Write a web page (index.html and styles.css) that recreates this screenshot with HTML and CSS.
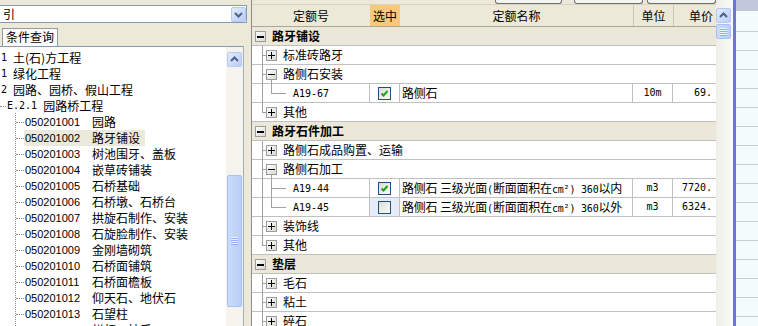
FILE: index.html
```html
<!DOCTYPE html>
<html lang="zh-CN">
<head>
    <meta charset="UTF-8">
    <title>定额查询</title>
    <link rel="stylesheet" href="styles.css">
</head>
<body>
<div class="app">
    <div class="left">
        <div class="combo">
            <span class="combo-text">引</span>
            <span class="btn combo-btn"><svg width="15" height="15" viewBox="0 0 15 15"><polyline points="4,6 7.5,9.5 11,6" fill="none" stroke="#4d6185" stroke-width="2"/></svg></span>
        </div>
        <div class="tabs"><span class="tab">条件查询</span></div>
        <div class="list">
            <div class="tree">
                <div class="node"><span class="m">1 </span>土(石)方工程</div>
                <div class="node"><span class="m">1 </span>绿化工程</div>
                <div class="node"><span class="m">2 </span>园路、园桥、假山工程</div>
                <div class="node chap"><span class="m">E.2.1 </span>园路桥工程</div>
                <div class="kids">
                    <div class="node item"><span class="lbl"><span class="code">050201001</span>园路</span></div>
                    <div class="node item sel"><span class="lbl"><span class="code">050201002</span>路牙铺设</span></div>
                    <div class="node item"><span class="lbl"><span class="code">050201003</span>树池围牙、盖板</span></div>
                    <div class="node item"><span class="lbl"><span class="code">050201004</span>嵌草砖铺装</span></div>
                    <div class="node item"><span class="lbl"><span class="code">050201005</span>石桥基础</span></div>
                    <div class="node item"><span class="lbl"><span class="code">050201006</span>石桥墩、石桥台</span></div>
                    <div class="node item"><span class="lbl"><span class="code">050201007</span>拱旋石制作、安装</span></div>
                    <div class="node item"><span class="lbl"><span class="code">050201008</span>石旋脸制作、安装</span></div>
                    <div class="node item"><span class="lbl"><span class="code">050201009</span>金刚墙砌筑</span></div>
                    <div class="node item"><span class="lbl"><span class="code">050201010</span>石桥面铺筑</span></div>
                    <div class="node item"><span class="lbl"><span class="code">050201011</span>石桥面檐板</span></div>
                    <div class="node item"><span class="lbl"><span class="code">050201012</span>仰天石、地伏石</span></div>
                    <div class="node item"><span class="lbl"><span class="code">050201013</span>石望柱</span></div>
                    <div class="node item"><span class="lbl"><span class="code">050201014</span>栏杆、扶手</span></div>
                </div>
            </div>
            <div class="sb sb-list">
                <span class="btn"><svg width="15" height="15" viewBox="0 0 15 15"><polyline points="4,9 7.5,5.5 11,9" fill="none" stroke="#4d6185" stroke-width="2"/></svg></span>
                <span class="thumb thumb-list"><span class="grip"></span></span>
            </div>
        </div>
    </div>

    <div class="split"></div>

    <div class="grid">
        <div class="grid-main">
            <div class="toolbar">
                <span class="tb-btn tb1"></span>
                <span class="tb-btn tb2"></span>
                <span class="tb-btn tb3"></span>
            </div>
            <div class="head">
                <div class="h-code">定额号</div>
                <div class="h-chk">选中</div>
                <div class="h-name">定额名称</div>
                <div class="h-unit">单位</div>
                <div class="h-price">单价</div>
            </div>
            <div class="rows">
                <div class="row grp"><div class="c-tree"><span class="box minus"></span><span class="t">路牙铺设</span></div></div>
                <div class="row"><div class="c-tree"><i class="v"></i><i class="h"></i><span class="box plus"></span><span class="t">标准砖路牙</span></div></div>
                <div class="row"><div class="c-tree"><i class="v"></i><i class="h"></i><i class="v2b"></i><span class="box minus"></span><span class="t">路侧石安装</span></div></div>
                <div class="row">
                    <div class="c-code"><i class="v"></i><i class="v2h"></i><i class="h2"></i><span class="m">A19-67</span></div>
                    <div class="c-chk"><span class="chk"><svg width="11" height="11" viewBox="0 0 11 11"><polyline points="2.5,5.5 4.5,7.5 8.5,3" fill="none" stroke="#21a121" stroke-width="2"/></svg></span></div>
                    <div class="c-name">路侧石</div>
                    <div class="c-unit m">10m</div>
                    <div class="c-price m">69.</div>
                </div>
                <div class="row"><div class="c-tree"><i class="vh"></i><i class="h"></i><span class="box plus"></span><span class="t">其他</span></div></div>

                <div class="row grp"><div class="c-tree"><span class="box minus"></span><span class="t">路牙石件加工</span></div></div>
                <div class="row"><div class="c-tree"><i class="v"></i><i class="h"></i><span class="box plus"></span><span class="t">路侧石成品购置、运输</span></div></div>
                <div class="row"><div class="c-tree"><i class="v"></i><i class="h"></i><i class="v2b"></i><span class="box minus"></span><span class="t">路侧石加工</span></div></div>
                <div class="row">
                    <div class="c-code"><i class="v"></i><i class="v2"></i><i class="h2"></i><span class="m">A19-44</span></div>
                    <div class="c-chk"><span class="chk"><svg width="11" height="11" viewBox="0 0 11 11"><polyline points="2.5,5.5 4.5,7.5 8.5,3" fill="none" stroke="#21a121" stroke-width="2"/></svg></span></div>
                    <div class="c-name">路侧石 三级光面<span class="m">(</span>断面面积在<span class="m">cm²) 360</span>以内</div>
                    <div class="c-unit m">m3</div>
                    <div class="c-price m">7720.</div>
                </div>
                <div class="row">
                    <div class="c-code"><i class="v"></i><i class="v2h"></i><i class="h2"></i><span class="m">A19-45</span></div>
                    <div class="c-chk cur"><span class="chk"></span></div>
                    <div class="c-name">路侧石 三级光面<span class="m">(</span>断面面积在<span class="m">cm²) 360</span>以外</div>
                    <div class="c-unit m">m3</div>
                    <div class="c-price m">6324.</div>
                </div>
                <div class="row"><div class="c-tree"><i class="v"></i><i class="h"></i><span class="box plus"></span><span class="t">装饰线</span></div></div>
                <div class="row"><div class="c-tree"><i class="vh"></i><i class="h"></i><span class="box plus"></span><span class="t">其他</span></div></div>

                <div class="row grp"><div class="c-tree"><span class="box minus"></span><span class="t">垫层</span></div></div>
                <div class="row"><div class="c-tree"><i class="v"></i><i class="h"></i><span class="box plus"></span><span class="t">毛石</span></div></div>
                <div class="row"><div class="c-tree"><i class="v"></i><i class="h"></i><span class="box plus"></span><span class="t">粘土</span></div></div>
                <div class="row"><div class="c-tree"><i class="v"></i><i class="h"></i><span class="box plus"></span><span class="t">碎石</span></div></div>
            </div>
        </div>
        <div class="sb sb-grid">
            <span class="btn"><svg width="15" height="15" viewBox="0 0 15 15"><polyline points="4,9 7.5,5.5 11,9" fill="none" stroke="#4d6185" stroke-width="2"/></svg></span>
            <span class="thumb thumb-grid"><span class="grip"></span></span>
        </div>
    </div>

    <div class="side">
        <div class="blue"></div>
        <div class="mint">
            <div class="mint-top"></div>
            <div class="mint-row first"></div>
            <div class="mint-row"></div>
            <div class="mint-row"></div>
            <div class="mint-row"></div>
            <div class="mint-row"></div>
            <div class="mint-row"></div>
            <div class="mint-row"></div>
            <div class="mint-row"></div>
            <div class="mint-row"></div>
            <div class="mint-row"></div>
            <div class="mint-row"></div>
            <div class="mint-row"></div>
            <div class="mint-row"></div>
            <div class="mint-row"></div>
            <div class="mint-row"></div>
            <div class="mint-row"></div>
        </div>
    </div>
</div>
</body>
</html>
```

FILE: styles.css
```css
* {
    box-sizing: border-box;
}
body {
    margin: 0;
    width: 758px;
    height: 326px;
    overflow: hidden;
    background-color: #ece9d8;
    font-family: "Noto Sans CJK SC", sans-serif;
    font-size: 12px;
    color: #000;
}
.app {
    display: flex;
    height: 326px;
}
.m {
    font-family: "DejaVu Sans Mono", "Noto Sans CJK SC", monospace;
    font-size: 10px;
}

/* left panel */
.left {
    width: 244px;
    display: flex;
    flex-direction: column;
}
.combo {
    margin-top: 5px;
    margin-right: -3px;
    height: 18px;
    border: 1px solid #7f9db9;
    border-left: none;
    background-color: #fff;
    display: flex;
    align-items: center;
    justify-content: space-between;
}
.combo-text {
    padding-left: 3px;
    line-height: 16px;
}
.combo-btn {
    height: 16px;
}
.btn {
    display: flex;
    align-items: center;
    justify-content: center;
    width: 15px;
    height: 15px;
    border: 1px solid #b6c9f3;
    border-radius: 2px;
    background: linear-gradient(135deg, #e3ebfd, #b9cdf7);
}
.btn svg {
    display: block;
    flex: none;
}
.tabs {
    height: 23px;
    padding: 5px 0 0 2px;
}
.tab {
    display: inline-block;
    height: 18px;
    padding: 0 3px;
    border: 1px solid #919b9c;
    border-bottom: none;
    background-color: #fcfcfe;
    line-height: 16px;
}
.list {
    flex: 1;
    display: flex;
    min-height: 0;
    border-top: 1px solid #7f9db9;
    border-right: 1px solid #a5acb5;
    background-color: #fff;
}
.tree {
    flex: 1;
    overflow: hidden;
    padding-top: 3px;
}
.node {
    height: 16px;
    line-height: 16px;
    display: flex;
    align-items: center;
    white-space: nowrap;
    padding-left: 1px;
}
.node .m {
    white-space: pre;
}
.chap {
    position: relative;
    padding-left: 7px;
}
.chap::before {
    content: "";
    position: absolute;
    left: 0;
    top: 8px;
    width: 6px;
    border-top: 1px dotted #8e8e8e;
}
.kids {
    position: relative;
}
.kids::before {
    content: "";
    position: absolute;
    left: 15px;
    top: -1px;
    bottom: 0;
    border-left: 1px dotted #8e8e8e;
}
.item {
    position: relative;
    padding-left: 24px;
}
.item::before {
    content: "";
    position: absolute;
    left: 16px;
    top: 8px;
    width: 8px;
    border-top: 1px dotted #8e8e8e;
}
.lbl {
    display: flex;
    align-items: center;
    height: 16px;
    padding: 0 5px 0 1px;
}
.code {
    width: 67px;
    font-family: "Liberation Sans", sans-serif;
    font-size: 11px;
}
.sel .lbl {
    background-color: #ebe8dc;
}
.sb {
    display: flex;
    flex-direction: column;
    background-color: #f4f3ee;
}
.sb-list {
    width: 17px;
    padding: 5px 1px 0 1px;
}
.thumb {
    display: flex;
    align-items: center;
    justify-content: center;
    border: 1px solid #a9bff0;
    border-radius: 2px;
    background: linear-gradient(90deg, #cddbfd, #b9cdf8);
}
.thumb-list {
    margin-top: 108px;
    height: 132px;
}
.grip {
    width: 7px;
    height: 8px;
    background: repeating-linear-gradient(#eef4fe 0 1px, #8eaef3 1px 2px);
}

/* splitter */
.split {
    width: 7px;
}

/* right grid */
.grid {
    display: flex;
    border-left: 1px solid #8c8c8c;
    background-color: #fff;
}
.grid-main {
    width: 464px;
    display: flex;
    flex-direction: column;
}
.toolbar {
    height: 4px;
    display: flex;
    background-color: #ece9d8;
}
.tb-btn {
    height: 4px;
    border: 1px solid #6f6f6f;
    border-top: none;
    border-radius: 0 0 3px 3px;
    background-color: #f6f5f0;
}
.tb1 {
    margin-left: 243px;
    width: 71px;
}
.tb2 {
    margin-left: 12px;
    width: 74px;
}
.tb3 {
    margin-left: 4px;
    width: 73px;
}
.head {
    display: flex;
    height: 23px;
    border-top: 1px solid #d8d4c4;
    border-bottom: 1px solid #aca899;
    background-color: #ece9d8;
    line-height: 21px;
    white-space: nowrap;
}
.h-code {
    width: 118px;
    text-align: center;
}
.h-chk {
    width: 30px;
    text-align: center;
    background-color: #f8c97c;
}
.h-name {
    width: 233px;
    text-align: center;
}
.h-unit {
    width: 40px;
    text-align: center;
    border-left: 1px solid #c9c5b4;
}
.h-price {
    width: 43px;
    text-align: right;
    padding-right: 3px;
    border-left: 1px solid #c9c5b4;
}
.rows {
    flex: 1;
    overflow: hidden;
}
.row {
    display: flex;
    height: 19px;
    border-bottom: 1px solid #c0c0c0;
    white-space: nowrap;
}
.grp {
    background-color: #ebe8da;
    font-weight: bold;
}
.c-tree {
    position: relative;
    flex: 1;
    display: flex;
    align-items: center;
    padding-left: 14px;
}
.grp .c-tree {
    padding-left: 3px;
}
.t {
    margin-left: 6px;
    line-height: 18px;
}
.box {
    position: relative;
    width: 11px;
    height: 11px;
    border: 1px solid #9c9c9c;
    background: linear-gradient(135deg, #fff, #d9d8d0);
}
.box::before {
    content: "";
    position: absolute;
    left: 1px;
    top: 4px;
    width: 7px;
    height: 1px;
    background-color: #000;
}
.plus::after {
    content: "";
    position: absolute;
    left: 4px;
    top: 1px;
    width: 1px;
    height: 7px;
    background-color: #000;
}
.grp .box::before {
    height: 2px;
}
.row i {
    position: absolute;
    background-color: #a0a0a0;
}
.v {
    left: 10px;
    top: 0;
    bottom: -1px;
    width: 1px;
}
.vh {
    left: 10px;
    top: 0;
    height: 9px;
    width: 1px;
}
.h {
    left: 10px;
    top: 9px;
    width: 4px;
    height: 1px;
}
.v2b {
    left: 19px;
    top: 14px;
    bottom: -1px;
    width: 1px;
}
.v2 {
    left: 19px;
    top: 0;
    bottom: -1px;
    width: 1px;
}
.v2h {
    left: 19px;
    top: 0;
    height: 9px;
    width: 1px;
}
.h2 {
    left: 19px;
    top: 9px;
    width: 15px;
    height: 1px;
}
.c-code {
    position: relative;
    width: 118px;
    display: flex;
    align-items: center;
    padding-left: 41px;
    border-right: 1px solid #c0c0c0;
}
.c-chk {
    width: 30px;
    display: flex;
    align-items: center;
    justify-content: center;
    border-right: 1px solid #c0c0c0;
}
.c-chk.cur {
    background-color: #e6edf8;
}
.chk {
    display: flex;
    align-items: center;
    justify-content: center;
    width: 13px;
    height: 13px;
    border: 1px solid #1c5180;
    background: linear-gradient(135deg, #dcdcd5, #fbfbfa);
}
.c-name {
    width: 233px;
    overflow: hidden;
    padding-left: 2px;
    line-height: 18px;
    letter-spacing: -0.2px;
    border-right: 1px solid #c0c0c0;
}
.c-unit {
    width: 40px;
    text-align: center;
    line-height: 18px;
    border-right: 1px solid #c0c0c0;
}
.c-price {
    width: 43px;
    text-align: right;
    padding-right: 4px;
    line-height: 18px;
}
.sb-grid {
    width: 17px;
    padding: 8px 2px 0 0;
    background: linear-gradient(90deg, #efeee8, #fbfbf8);
}
.thumb-grid {
    margin-top: 1px;
    height: 15px;
}

/* far right strip */
.side {
    flex: 1;
    display: flex;
}
.blue {
    width: 3px;
    background-color: #6b77d3;
}
.mint {
    flex: 1;
    background-color: #f2fcfa;
}
.mint-top {
    height: 11px;
    background-color: #c2c8da;
}
.mint-row {
    height: 19px;
    border-bottom: 1px solid #c6d0cd;
}
.mint-row.first {
    height: 21px;
}
```
